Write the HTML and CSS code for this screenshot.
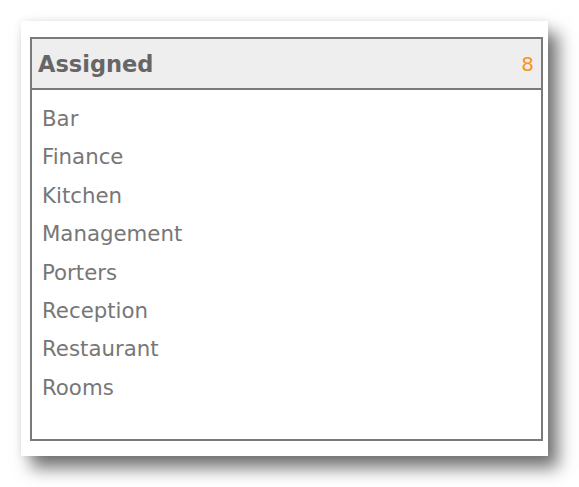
FILE: index.html
```html
<!DOCTYPE html>
<html lang="en">
<head>
  <meta charset="UTF-8" />
  <title>Assigned</title>
  <link rel="stylesheet" href="styles.css">
</head>
<body>
  <div class="card">
    <div class="panel">
      <div class="panel-head">
        <span class="title">Assigned</span>
        <span class="count">8</span>
      </div>
      <ul class="list">
        <li>Bar</li>
        <li>Finance</li>
        <li>Kitchen</li>
        <li>Management</li>
        <li>Porters</li>
        <li>Reception</li>
        <li>Restaurant</li>
        <li>Rooms</li>
      </ul>
    </div>
  </div>
</body>
</html>
```

FILE: styles.css
```css
body {
  margin: 0;
  padding: 21px 0 31px 21px;
  background: #fff;
  font-family: 'DejaVu Sans', Verdana, sans-serif;
}
.card {
  width: 527px;
  height: 435px;
  box-sizing: border-box;
  padding: 16px 5px 15px 9px;
  background: #fff;
  box-shadow: 10px 12px 16px rgba(0,0,0,0.55), 0 0 8px rgba(0,0,0,0.08);
}
.panel {
  height: 100%;
  box-sizing: border-box;
  border: 2px solid #7a7a7a;
  background: #fff;
}
.panel-head {
  height: 49px;
  display: flex;
  align-items: center;
  justify-content: space-between;
  padding: 0 7px 0 6px;
  background: #eeeeee;
  border-bottom: 2px solid #7a7a7a;
}
.title {
  font-size: 22.5px;
  font-weight: bold;
  color: #666;
}
.count {
  font-size: 20px;
  color: #f7941d;
}
.list {
  list-style: none;
  margin: 0;
  padding: 10px 0 0 10px;
}
.list li {
  font-size: 21.3px;
  line-height: 38.4px;
  color: #777;
}
```
